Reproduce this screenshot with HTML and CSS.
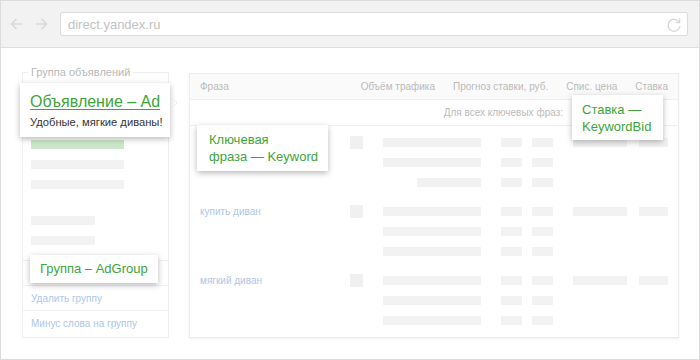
FILE: index.html
```html
<!DOCTYPE html>
<html lang="ru">
<head>
    <meta charset="UTF-8">
    <meta name="viewport" content="width=device-width, initial-scale=1.0">
    <title>Яндекс.Директ</title>
    <link rel="stylesheet" href="styles.css">
</head>
<body>
    <div class="browser">
        <div class="toolbar">
            <div class="nav">
                <svg width="13" height="12" viewBox="0 0 13 12"><path d="M12 6H1.5M6.5 1L1.5 6l5 5" fill="none" stroke="#d9d9d9" stroke-width="1.6"/></svg>
                <svg width="13" height="12" viewBox="0 0 13 12"><path d="M1 6h10.5M6.5 1l5 5-5 5" fill="none" stroke="#d9d9d9" stroke-width="1.6"/></svg>
            </div>
            <div class="address">
                <span class="url">direct.yandex.ru</span>
                <svg class="reload" width="16" height="16" viewBox="0 0 16 16"><path d="M13.2 5.2A6 6 0 1 0 14 9" fill="none" stroke="#d6d6d6" stroke-width="1.3"/><path d="M13.6 1.6v4h-4" fill="none" stroke="#d6d6d6" stroke-width="1.3"/></svg>
            </div>
        </div>

        <div class="content">
            <div class="group">
                <span class="group-title">Группа объявлений</span>
                <div class="group-bars">
                    <div class="bar bar-green"></div>
                    <div class="bar"></div>
                    <div class="bar"></div>
                    <div class="bar bar-half bar-spaced"></div>
                    <div class="bar bar-half"></div>
                </div>
                <div class="group-rows">
                    <div class="group-row"></div>
                    <div class="group-row"><a class="link">Удалить группу</a></div>
                    <div class="group-row"><a class="link">Минус слова на группу</a></div>
                </div>

                <div class="note note-ad">
                    <a class="ad-title">Объявление – Ad</a>
                    <div class="ad-text">Удобные, мягкие диваны!</div>
                </div>
                <svg class="chevron" width="8" height="14" viewBox="0 0 8 14"><path d="M1 1l6 6-6 6" fill="none" stroke="#ececec" stroke-width="1"/></svg>
                <div class="note note-group">Группа – AdGroup</div>
            </div>

            <div class="table">
                <div class="table-head">
                    <span>Фраза</span>
                    <div class="head-cols">
                        <span>Объём трафика</span>
                        <span>Прогноз ставки, руб.</span>
                        <span>Спис. цена</span>
                        <span>Ставка</span>
                    </div>
                </div>
                <div class="table-all">Для всех ключевых фраз:</div>

                <div class="keywords">
                    <div class="kw">
                        <span class="phrase"></span>
                        <span class="check"></span>
                        <span class="bar bar-a"></span>
                        <span class="bar bar-b"></span>
                        <span class="bar bar-c"></span>
                        <span class="bar bar-d"></span>
                        <span class="bar bar-e"></span>
                        <span class="bar bar-a row2"></span>
                        <span class="bar bar-b row2"></span>
                        <span class="bar bar-c row2"></span>
                        <span class="bar bar-a bar-short row3"></span>
                        <span class="bar bar-b row3"></span>
                        <span class="bar bar-c row3"></span>
                    </div>
                    <div class="kw">
                        <a class="phrase link">купить диван</a>
                        <span class="check"></span>
                        <span class="bar bar-a"></span>
                        <span class="bar bar-b"></span>
                        <span class="bar bar-c"></span>
                        <span class="bar bar-d"></span>
                        <span class="bar bar-e"></span>
                        <span class="bar bar-a row2"></span>
                        <span class="bar bar-b row2"></span>
                        <span class="bar bar-c row2"></span>
                        <span class="bar bar-a row3"></span>
                        <span class="bar bar-b row3"></span>
                        <span class="bar bar-c row3"></span>
                    </div>
                    <div class="kw">
                        <a class="phrase link">мягкий диван</a>
                        <span class="check"></span>
                        <span class="bar bar-a"></span>
                        <span class="bar bar-b"></span>
                        <span class="bar bar-c"></span>
                        <span class="bar bar-d"></span>
                        <span class="bar bar-e"></span>
                        <span class="bar bar-a row2"></span>
                        <span class="bar bar-b row2"></span>
                        <span class="bar bar-c row2"></span>
                        <span class="bar bar-a row3"></span>
                        <span class="bar bar-b row3"></span>
                        <span class="bar bar-c row3"></span>
                    </div>
                </div>

                <div class="note note-keyword">Ключевая<br>фраза — Keyword</div>
                <div class="note note-bid">Ставка —<br>KeywordBid</div>
            </div>
        </div>
    </div>
</body>
</html>
```

FILE: styles.css
```css
* {
    box-sizing: border-box;
}

body {
    margin: 0;
    font-family: 'Liberation Sans', Arial, sans-serif;
    background-color: #fff;
}

.browser {
    width: 700px;
    height: 360px;
    border: 1px solid #dcdcdc;
    background-color: #fff;
}

.toolbar {
    display: flex;
    align-items: flex-start;
    height: 47px;
    padding: 11px 10px 0 9px;
    background-color: #f2f2f2;
    border-bottom: 1px solid #dedede;
}

.nav {
    display: flex;
    gap: 12px;
    padding-top: 6px;
}

.address {
    display: flex;
    align-items: center;
    justify-content: space-between;
    width: 628px;
    height: 24px;
    margin-left: 12px;
    padding: 0 5px 0 7px;
    background-color: #fff;
    border: 1px solid #dcdcdc;
    border-radius: 2px;
}

.url {
    font-size: 13px;
    color: #c2c2c2;
}

.reload {
    margin-top: 1px;
}

.content {
    display: flex;
    align-items: flex-start;
    gap: 20px;
    padding: 24px 0 0 21px;
}

/* left: ad group */

.group {
    position: relative;
    width: 147px;
    height: 266px;
    border: 1px solid #eeeeee;
}

.group-title {
    position: absolute;
    top: -8px;
    left: 5px;
    padding: 0 3px;
    font-size: 11px;
    line-height: 14px;
    color: #b8b8b8;
    background-color: #fff;
}

.group-bars {
    display: flex;
    flex-direction: column;
    gap: 11px;
    padding: 67px 8px 0;
}

.bar {
    display: block;
    width: 93px;
    height: 9px;
    background-color: #f2f2f2;
}

.bar-green {
    background-color: #cbe6c8;
}

.bar-half {
    width: 64px;
}

.bar-spaced {
    margin-top: 16px;
}

.group-rows {
    margin-top: 15px;
}

.group-row {
    display: flex;
    align-items: center;
    height: 25px;
    padding-left: 8px;
    border-top: 1px solid #f0f0f0;
}

.link {
    font-size: 10px;
    color: #aec6ea;
}

/* notes over the content */

.note {
    position: absolute;
    background-color: #fff;
    box-shadow: 0 2px 6px rgba(0, 0, 0, 0.28);
    color: #3da53a;
    font-size: 13px;
    line-height: 17px;
}

.note-ad {
    top: 10px;
    left: -3px;
    width: 150px;
    height: 54px;
    padding: 9px 0 0 10px;
}

.ad-title {
    display: block;
    font-size: 16px;
    line-height: 20px;
    text-decoration: underline;
    text-underline-offset: 2px;
}

.ad-text {
    margin-top: 3px;
    font-size: 11.2px;
    line-height: 15px;
    white-space: nowrap;
    color: #333;
}

.chevron {
    position: absolute;
    top: 23px;
    left: 147px;
}

.note-group {
    top: 182px;
    left: 7px;
    width: 128px;
    height: 28px;
    padding: 5px 0 0 10px;
}

/* right: keywords table */

.table {
    position: relative;
    width: 490px;
    height: 265px;
    margin-top: 1px;
    border: 1px solid #ececec;
    box-shadow: 0 1px 2px rgba(0, 0, 0, 0.06);
}

.table-head {
    display: flex;
    align-items: center;
    justify-content: space-between;
    height: 26px;
    padding: 0 10px;
    background-color: #fafafa;
    border-bottom: 1px solid #efefef;
    font-size: 10px;
    color: #bbb;
}

.head-cols {
    display: flex;
    gap: 18px;
}

.table-all {
    height: 26px;
    padding: 7px 115px 0 0;
    text-align: right;
    font-size: 10px;
    color: #bbb;
    border-bottom: 1px solid #efefef;
}

.keywords {
    display: flex;
    flex-direction: column;
    gap: 20px;
    padding: 12px 10px 0;
}

.kw {
    display: grid;
    grid-template-columns: 150px 33px 118px 31px 41px 66px 29px;
    grid-template-rows: 9px 9px 9px;
    row-gap: 11px;
}

.phrase {
    align-self: center;
    line-height: 13px;
}

.check {
    align-self: center;
    width: 13px;
    height: 13px;
    background-color: #f0f0f0;
}

.bar-a { grid-column: 3; width: 98px; }
.bar-b { grid-column: 4; width: 21px; }
.bar-c { grid-column: 5; width: 21px; }
.bar-d { grid-column: 6; width: 54px; }
.bar-e { grid-column: 7; width: 29px; }

.row2 { grid-row: 2; }
.row3 { grid-row: 3; }

.bar-short {
    width: 64px;
    margin-left: 34px;
}

.note-keyword {
    top: 51px;
    left: 7px;
    width: 131px;
    height: 46px;
    padding: 6px 0 0 12px;
}

.note-bid {
    top: 21px;
    left: 382px;
    width: 91px;
    height: 45px;
    padding: 6px 0 0 10px;
}
```
